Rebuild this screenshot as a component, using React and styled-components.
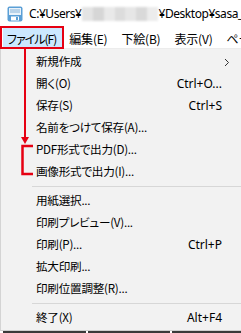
import React from "react";
import styled, { createGlobalStyle } from "styled-components";

const GlobalStyle = createGlobalStyle`
  html, body { margin: 0; padding: 0; background: #ffffff; }
  body {
    font-family: "Noto Sans", "Noto Sans CJK JP", sans-serif;
    font-size: 12px;
    color: #000;
  }
`;

const Window = styled.div`
  position: relative;
  width: 241px;
  height: 333px;
  overflow: hidden;
  background: #ffffff;
`;

const TitleBar = styled.div`
  height: 27px;
  display: flex;
  align-items: center;
  padding-left: 7px;
  gap: 6px;
  white-space: nowrap;
  font-size: 12px;
  font-feature-settings: "palt";
`;

const IconBox = styled.span`
  flex: 0 0 16px;
  width: 16px;
  height: 16px;
  display: flex;
`;

const TitleText = styled.span`
  display: flex;
  align-items: center;
  letter-spacing: -0.45px;
`;

const Blur = styled.span`
  display: inline-flex;
  flex: 0 0 75px;
  width: 75px;
  height: 14px;
  margin: 0 1px;
  filter: blur(1.2px);
`;

const BlurCell = styled.span`
  flex: 1;
  background: ${(p) => p.$c};
`;

const MenuBar = styled.div`
  height: 21px;
  display: flex;
  align-items: stretch;
  padding-left: 3px;
  border-bottom: 1px solid #ececec;
  font-family: "Noto Sans CJK JP", sans-serif;
  font-feature-settings: "palt";
  white-space: nowrap;
`;

const BarItem = styled.div`
  display: flex;
  align-items: center;
  padding: 1px ${(p) => p.$pr ?? 7}px 0 ${(p) => p.$pl ?? 7}px;
  margin: 1px 0;
  letter-spacing: ${(p) => (p.$tight ? "-1px" : "-0.2px")};
  background: ${(p) => (p.$active ? "#cce8ff" : "transparent")};
`;

const Dropdown = styled.div`
  background: #f2f2f2;
  padding: 2px 0 1px 0;
  border-left: 1px solid #d4d4d4;
  border-bottom: 1px solid #cfcfcf;
  font-family: "Noto Sans CJK JP", sans-serif;
  font-size: 11.6px;
  letter-spacing: -0.25px;
  font-feature-settings: "palt";
`;

const Row = styled.div`
  height: 22px;
  display: flex;
  align-items: center;
  justify-content: space-between;
  padding: 0 19px 0 35px;
  white-space: nowrap;
`;

const Label = styled.span`
  line-height: 1;
`;

const Shortcut = styled.span`
  font-family: "Noto Sans", sans-serif;
  font-size: 12px;
  letter-spacing: 0;
  line-height: 1;
`;

const SubArrow = styled.svg`
  margin-right: -8px;
`;

const Separator = styled.div`
  height: 7px;
  display: flex;
  align-items: center;
  padding-left: 31px;
  &::after {
    content: "";
    flex: 1;
    height: 1px;
    background: #d7d7d7;
  }
`;

const BottomStrip = styled.div`
  height: 2px;
  display: flex;
  gap: 2px;
  padding-left: 3px;
`;

const StripSeg = styled.span`
  width: ${(p) => p.$w}px;
  background: #3a3a3a;
`;

const RedBox = styled.div`
  position: absolute;
  left: 0;
  top: 26px;
  width: 60px;
  height: 19px;
  border: 2px solid #e60012;
  pointer-events: none;
`;

const Overlay = styled.svg`
  position: absolute;
  left: 0;
  top: 0;
  pointer-events: none;
`;

const AppIcon = () => (
  <IconBox>
    <svg width="16" height="16" viewBox="0 0 16 16">
      <rect x="0.5" y="0.5" width="15" height="15" rx="2" fill="#5b9fd6" />
      <rect x="2" y="2" width="12" height="7" fill="#e9f2fa" />
      <rect x="3" y="3.5" width="10" height="1" fill="#8ab4d8" />
      <rect x="3" y="5.5" width="10" height="1" fill="#8ab4d8" />
      <rect x="4" y="10.5" width="8" height="4" fill="#ffffff" />
      <rect x="9" y="11" width="2" height="3" fill="#5b9fd6" />
    </svg>
  </IconBox>
);

const items1 = [
  { label: "新規作成", sub: true },
  { label: "開く(O)", sc: "Ctrl+O..." },
  { label: "保存(S)", sc: "Ctrl+S" },
  { label: "名前をつけて保存(A)..." },
  { label: "PDF形式で出力(D)..." },
  { label: "画像形式で出力(I)..." },
];
const items2 = [
  { label: "用紙選択..." },
  { label: "印刷プレビュー(V)..." },
  { label: "印刷(P)...", sc: "Ctrl+P" },
  { label: "拡大印刷..." },
  { label: "印刷位置調整(R)..." },
];
const items3 = [{ label: "終了(X)", sc: "Alt+F4" }];

const blurColors = ["#e4e4e4", "#d6d6d6", "#e9e9e9", "#dcdcdc", "#e6e6e6", "#d9d9d9", "#ececec"];

const MenuRow = ({ label, sc, sub }) => (
  <Row>
    <Label>{label}</Label>
    {sc && <Shortcut>{sc}</Shortcut>}
    {sub && (
      <SubArrow width="6" height="9" viewBox="0 0 6 9">
        <path d="M1 1 L4.5 4.5 L1 8" fill="none" stroke="#333" strokeWidth="1" />
      </SubArrow>
    )}
  </Row>
);

export default function App() {
  return (
    <>
      <GlobalStyle />
      <Window>
        <TitleBar>
          <AppIcon />
          <TitleText>
            C:¥Users¥
            <Blur>
              {blurColors.map((c, i) => (
                <BlurCell key={i} $c={c} />
              ))}
            </Blur>
            ¥Desktop¥sasa_n
          </TitleText>
        </TitleBar>
        <MenuBar>
          <BarItem $active $tight $pl={4} $pr={6}>ファイル(F)</BarItem>
          <BarItem>編集(E)</BarItem>
          <BarItem>下絵(B)</BarItem>
          <BarItem>表示(V)</BarItem>
          <BarItem>ページ(P)</BarItem>
        </MenuBar>
        <Dropdown>
          {items1.map((it) => (
            <MenuRow key={it.label} {...it} />
          ))}
          <Separator />
          {items2.map((it) => (
            <MenuRow key={it.label} {...it} />
          ))}
          <Separator />
          {items3.map((it) => (
            <MenuRow key={it.label} {...it} />
          ))}
        </Dropdown>
        <BottomStrip>
          <StripSeg $w={85} />
          <StripSeg $w={84} />
          <StripSeg $w={70} />
        </BottomStrip>
        <RedBox />
        <Overlay width="241" height="333" viewBox="0 0 241 333">
          <line x1="25" y1="48" x2="25" y2="139" stroke="#e60012" strokeWidth="2" />
          <path d="M21 137 L29 137 L25 144 Z" fill="#e60012" />
          <path d="M33 146 L22.5 146 L22.5 174 L33 174" fill="none" stroke="#e60012" strokeWidth="2.5" />
        </Overlay>
      </Window>
    </>
  );
}
